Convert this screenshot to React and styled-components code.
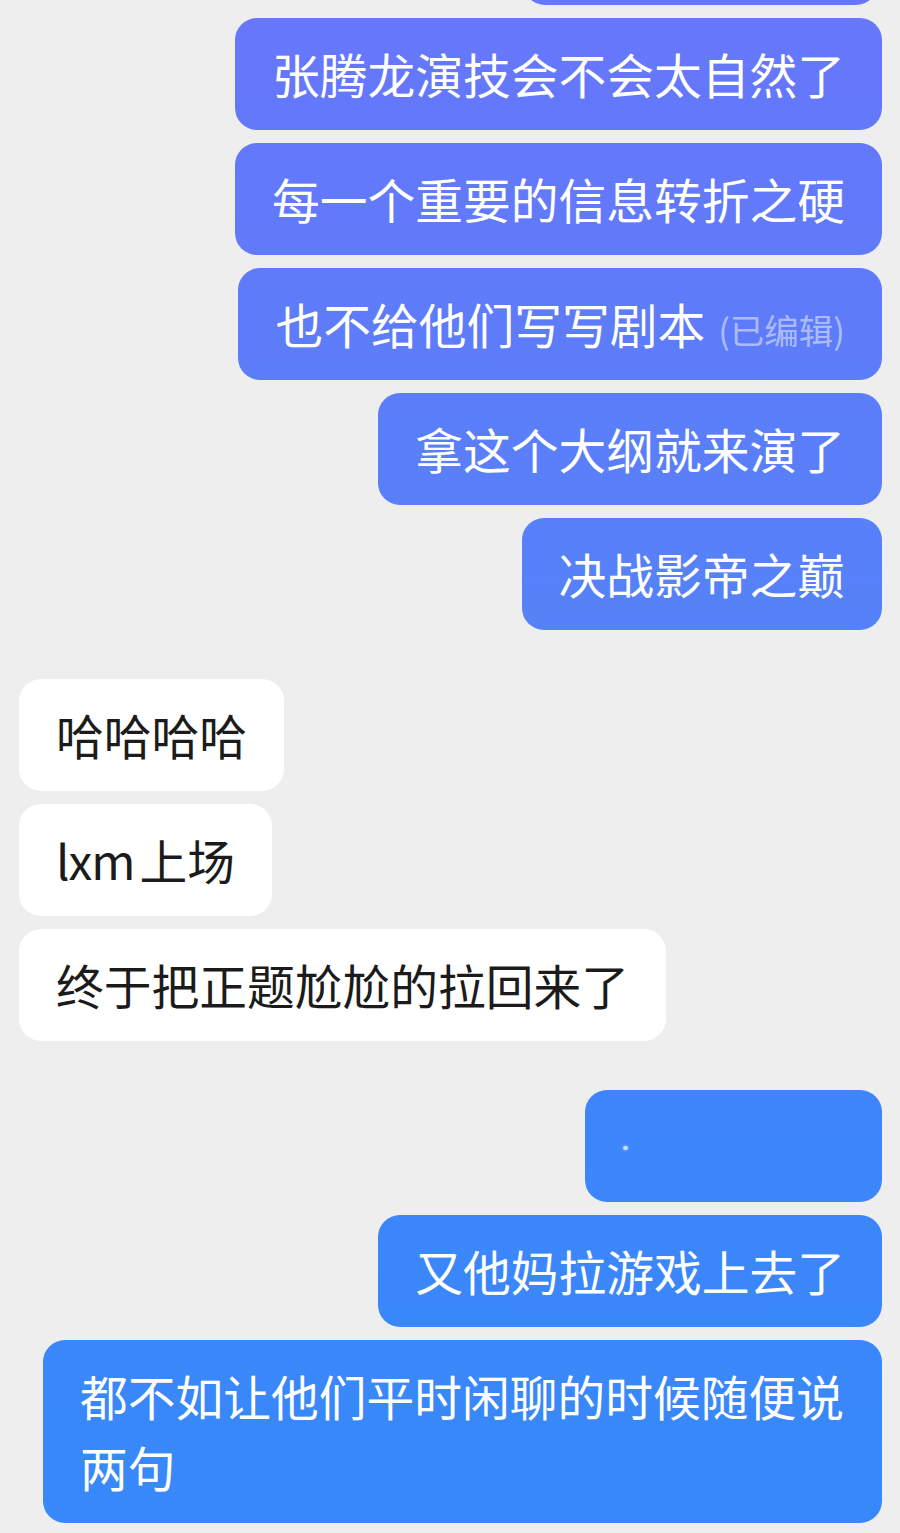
import styled, { createGlobalStyle } from "styled-components";

const GlobalStyle = createGlobalStyle`
  html, body {
    margin: 0;
    padding: 0;
    background: #eeeeee;
  }
  body {
    font-family: "Noto Sans CJK SC", "Noto Sans", sans-serif;
  }
`;

const Chat = styled.div`
  width: 900px;
  height: 1533px;
  overflow: hidden;
  box-sizing: border-box;
  padding: 0 18px 0 19px;
  display: flex;
  flex-direction: column;
  gap: 13px;
`;

const Row = styled.div`
  display: flex;
  justify-content: ${(props) => (props.mine ? "flex-end" : "flex-start")};
  margin-top: ${(props) => (props.newGroup ? "36px" : "0")};
`;

const Bubble = styled.div`
  position: relative;
  box-sizing: border-box;
  max-width: 839px;
  min-height: 112px;
  padding: 19.5px 37px 21.5px;
  border-radius: 22px;
  font-size: 47.75px;
  line-height: 71px;
  color: ${(props) => (props.mine ? "#ffffff" : "#1b1b1b")};
  background: ${(props) =>
    props.mine
      ? "linear-gradient(180deg, #6777fb 0px, #6478fb 120px, #5c7df9 380px, #5582f8 620px, #3e85fb 1100px, #3789f9 1533px) fixed"
      : "#ffffff"};
  white-space: pre-wrap;
`;

const Cut = styled(Bubble)`
  width: 355px;
  margin-top: -107px;
  margin-right: 4px;
`;

const Blank = styled(Bubble)`
  width: 297px;
  &::after {
    content: "";
    position: absolute;
    left: 38px;
    top: 56px;
    width: 5px;
    height: 4px;
    border-radius: 50%;
    background: rgba(230, 240, 255, 0.85);
    box-shadow: 0 0 3px rgba(230, 240, 255, 0.7);
  }
`;

const Edited = styled.span`
  font-size: 34.5px;
  line-height: 1;
  margin-left: 13px;
  color: rgba(225, 230, 255, 0.62);
`;

const Latin = styled.span`
  margin-right: 5px;
  letter-spacing: -1px;
`;

const App = () => {
  return (
    <>
      <GlobalStyle />
      <Chat>
        <Row mine>
          <Cut mine />
        </Row>
        <Row mine>
          <Bubble mine>张腾龙演技会不会太自然了</Bubble>
        </Row>
        <Row mine>
          <Bubble mine>每一个重要的信息转折之硬</Bubble>
        </Row>
        <Row mine>
          <Bubble mine>
            也不给他们写写剧本<Edited>(已编辑)</Edited>
          </Bubble>
        </Row>
        <Row mine>
          <Bubble mine>拿这个大纲就来演了</Bubble>
        </Row>
        <Row mine>
          <Bubble mine>决战影帝之巅</Bubble>
        </Row>

        <Row newGroup>
          <Bubble>哈哈哈哈</Bubble>
        </Row>
        <Row>
          <Bubble>
            <Latin>lxm</Latin>上场
          </Bubble>
        </Row>
        <Row>
          <Bubble>终于把正题尬尬的拉回来了</Bubble>
        </Row>

        <Row mine newGroup>
          <Blank mine />
        </Row>
        <Row mine>
          <Bubble mine>又他妈拉游戏上去了</Bubble>
        </Row>
        <Row mine>
          <Bubble mine>都不如让他们平时闲聊的时候随便说两句</Bubble>
        </Row>
      </Chat>
    </>
  );
};

export default App;
